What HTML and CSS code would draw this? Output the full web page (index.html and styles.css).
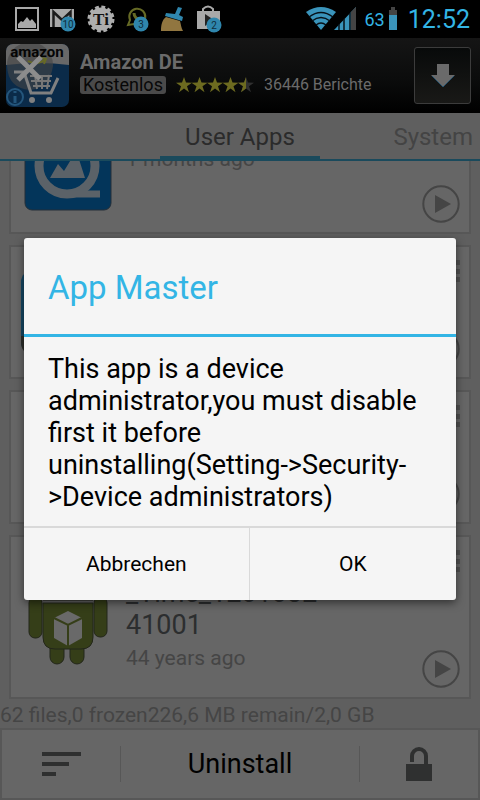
FILE: index.html
```html
<!DOCTYPE html>
<html lang="en">
<head>
<meta charset="utf-8">
<meta name="viewport" content="width=device-width, initial-scale=1">
<title>App Master</title>
<link rel="stylesheet" href="styles.css">
</head>
<body>
<svg class="defs" width="0" height="0" aria-hidden="true">
  <symbol id="play" viewBox="0 0 38 38"><circle cx="19" cy="19" r="17.7" fill="none" stroke="currentColor" stroke-width="2"/><path d="M13 10v18l16-9z" fill="currentColor"/></symbol>
  <symbol id="dots" viewBox="0 0 6 23"><path d="M0 0h6v5H0zM0 9h6v5H0zM0 17h6v5H0z" fill="currentColor"/></symbol>
</svg>
<header class="status">
  <div class="notices">
    <svg width="24" height="24" viewBox="0 0 24 24"><path d="M1 1h22v22H1z" fill="none" stroke="#a9a9a9" stroke-width="2"/><path d="M3 21v-4l3-3 2 1 4-5 3 4 2-2 4 5v4z" fill="#a9a9a9"/></svg>
    <svg width="26" height="26" viewBox="0 0 26 26"><path d="M0 3h24v18H0z" fill="#a9a9a9"/><path d="M3.500 21V6l8.500 8 8.500-8v15" fill="none" stroke="#1c1c1c" stroke-width="2.500"/><circle cx="18" cy="18" r="7.500" fill="#2f86ad"/><text x="18" y="22" class="count">10</text></svg>
    <svg width="28" height="28" viewBox="0 0 28 28"><circle cx="14" cy="14" r="11.500" fill="#adadad"/><circle cx="14" cy="14" r="12" fill="none" stroke="#adadad" stroke-width="3" stroke-dasharray="3.800 2.480"/><text x="14" y="20" class="ti">Ti</text></svg>
    <svg width="24" height="26" viewBox="0 0 24 26"><path d="M2 19l2-5a8 8 0 1 1 4 4z" fill="none" stroke="#666a25" stroke-width="2"/><path d="M8 7c0 4 3 7 7 6" fill="none" stroke="#666a25" stroke-width="3"/><circle cx="15" cy="18" r="7.500" fill="#2f86ad"/><text x="15" y="22" class="count">3</text></svg>
    <svg width="24" height="26" viewBox="0 0 24 26"><path d="M5 11l14 4c1 3 1 7 3 10H0c0-6 1-11 5-14z" fill="#917640"/><path d="M5 7l9 1 3-7 4 1-3 7 4 2-1 4L4 10z" fill="#2f86ad"/></svg>
    <svg width="26" height="28" viewBox="0 0 26 28"><path d="M7 7V4q5-5 10 0v3" fill="none" stroke="#a9a9a9" stroke-width="2"/><path d="M1 6h23v18H1z" fill="#a9a9a9"/><path d="M9 9v12l9-6z" fill="#222"/><circle cx="18" cy="20" r="7.500" fill="#2f86ad"/><text x="18" y="24" class="count">2</text></svg>
  </div>
  <div class="system">
    <svg width="51" height="24" viewBox="0 0 51 24"><path d="M15 23L0 5q15-10 30 0z" fill="#3a94bb"/><path d="M3 10q12-9 24 0M6 14q9-7 18 0M10 18q5-4 10 0" fill="none" stroke="#061018" stroke-width="1.500"/><path d="M28 23L50 0v23z" fill="#3a94bb"/><path d="M45 5l5-5v23h-5z" fill="#444"/><path d="M33 17v6M38 12v11M44 6v17" stroke="#061018" stroke-width="1.500"/></svg>
    <span class="level">63</span>
    <svg width="8" height="24" viewBox="0 0 8 24"><path d="M0 3h2V0h4v3h2v6H0z" fill="#444"/><path d="M0 8h8v15H0z" fill="#3a94bb"/></svg>
    <time class="clock">12:52</time>
  </div>
</header>
<section class="ad">
  <svg class="ad-logo" width="63" height="63" viewBox="0 0 63 63">
    <rect width="63" height="63" rx="7" fill="#0b2b49"/><path d="M0 21V7a7 7 0 0 1 7-7h49a7 7 0 0 1 7 7v14q-30-4-63 0z" fill="#686868"/>
    <path d="M1 22a23 23 0 0 1 46-2v2q-3 22-23 24Q2 44 1 22z" fill="#454545" opacity=".6"/>
    <text x="31" y="13" class="brand">amazon</text>
    <path d="M22 17q9 5 18-2M35 14l5 1-2 5" fill="none" stroke="#666a25" stroke-width="2"/>
    <path d="M8 28h10l7 21h20l7-15" fill="none" stroke="#808080" stroke-width="3"/><path d="M24 32h22M25 37h20M27 42h17M29 31l2 14M36 31v14M43 31l-2 14" stroke="#777" stroke-width="2"/>
    <circle cx="26" cy="56" r="3" fill="#808080"/><circle cx="43" cy="56" r="3" fill="#808080"/>
    <circle cx="9" cy="53" r="8" fill="none" stroke="#24567c" stroke-width="2"/><path d="M9 47v2M9 52v7" stroke="#24567c" stroke-width="3"/>
    <path d="M12 13l22 22M35 13L12 36" stroke="#8c8c8c" stroke-width="5"/>
  </svg>
  <div class="ad-info">
    <strong class="ad-name">Amazon DE</strong>
    <div class="ad-meta">
      <span class="free">Kostenlos</span>
      <svg width="78" height="16" viewBox="0 0 78 16"><defs><path id="star" d="M8 0l2 5.500 6 .2-5 3.500 2 6-5-3.700-5 3.700 2-6-5-3.500 6-.2z"/></defs><g fill="#6d6b20"><use href="#star"/><use href="#star" x="15.500"/><use href="#star" x="31"/><use href="#star" x="46.500"/></g><use href="#star" x="62" fill="#303030"/><path d="M70 0v11.500l-5 3.700 2-6-5-3.500 6-.2z" fill="#6d6b20"/></svg>
      <span class="reviews">36446 Berichte</span>
    </div>
  </div>
  <button class="download" aria-label="Download"><svg width="24" height="24" viewBox="0 0 24 24"><path d="M6 0h12v11h6L12 23 0 11h6z" fill="#6a6a6a"/><path d="M1 12l11 11 11-11" fill="none" stroke="#24506b"/></svg></button>
</section>
<nav class="tabs">
  <a class="tab active" href="#user">User Apps</a>
  <a class="tab next" href="#system">System</a>
</nav>
<main class="list" id="user">
  <article class="card">
    <svg class="icon" width="88" height="88" viewBox="0 0 88 88"><rect x="1" y="1" width="86" height="86" rx="7" fill="#03355a" stroke="#252f38"/><circle cx="43" cy="43" r="28" fill="none" stroke="#5b6268" stroke-width="9"/><path d="M42 71h34" stroke="#5b6268" stroke-width="7"/><path d="M26 55l8-14 6 7 11-18h2l8 25z" fill="#5b6268"/></svg>
    <div class="text short"><p>1 months ago</p></div>
    <button class="more" aria-label="More"><svg width="6" height="23"><use href="#dots"/></svg></button>
    <button class="open" aria-label="Open"><svg width="38" height="38"><use href="#play"/></svg></button>
  </article>
  <article class="card">
    <svg class="icon wide" width="96" height="84" viewBox="0 0 96 84"><rect width="96" height="84" rx="12" fill="#174864"/><path d="M0 66h96v6q0 12-12 12H12Q0 84 0 72z" fill="#2c2e29"/></svg>
    <button class="more" aria-label="More"><svg width="6" height="23"><use href="#dots"/></svg></button>
    <button class="open" aria-label="Open"><svg width="38" height="38"><use href="#play"/></svg></button>
  </article>
  <article class="card">
    <button class="more" aria-label="More"><svg width="6" height="23"><use href="#dots"/></svg></button>
    <button class="open" aria-label="Open"><svg width="38" height="38"><use href="#play"/></svg></button>
  </article>
  <article class="card">
    <svg class="icon" width="88" height="96" viewBox="0 0 88 96"><g fill="#353e18" stroke="#23261a"><rect x="5" y="28" width="13" height="41" rx="6"/><rect x="70" y="28" width="13" height="40" rx="6"/><rect x="26" y="68" width="14" height="27" rx="7"/><rect x="46" y="68" width="14" height="27" rx="7"/><path d="M19 34h50v34q0 12-12 12H31q-12 0-12-12z"/><path d="M19 31q2-22 25-22t25 22z"/></g><path d="M30 49l14-7 14 7v20l-14 8-14-8z" fill="#696969"/><path d="M30 49l14 7 14-7M44 56v21" fill="none" stroke="#353e18" stroke-width="2"/></svg>
    <div class="text long"><h2>_Time_1201032<br>41001</h2><p>44 years ago</p></div>
    <button class="more" aria-label="More"><svg width="6" height="23"><use href="#dots"/></svg></button>
    <button class="open" aria-label="Open"><svg width="38" height="38"><use href="#play"/></svg></button>
  </article>
</main>
<p class="summary">62 files,0 frozen226,6 MB remain/2,0 GB</p>
<footer class="actions">
  <button aria-label="Sort"><svg width="40" height="26" viewBox="0 0 40 26"><path d="M1 1h39v4H1zM1 11h27v4H1zM1 21h14v4H1z" fill="#2f3030"/></svg></button>
  <button class="uninstall">Uninstall</button>
  <button aria-label="Unlock"><svg width="28" height="36" viewBox="0 0 28 36"><path d="M7 16V10a7 7 0 0 1 14 0v10" fill="none" stroke="#2f3030" stroke-width="4"/><path d="M1 18h26v17H1z" fill="#2f3030"/></svg></button>
</footer>
<div class="overlay">
  <section class="dialog" role="alertdialog" aria-labelledby="title" aria-describedby="message">
    <h1 id="title">App Master</h1>
    <p id="message">This app is a device administrator,you must disable first it before uninstalling(Setting-&gt;Security-&gt;Device administrators)</p>
    <div class="choices"><button>Abbrechen</button><button>OK</button></div>
  </section>
</div>
</body>
</html>
```

FILE: styles.css
```css
* { box-sizing: border-box; }
body {
  margin: 0;
  height: 100vh;
  display: flex;
  flex-direction: column;
  position: relative;
  overflow: hidden;
  background: #5f5f5f;
  color: #2c2e2f;
  font-family: Roboto, "Liberation Sans", sans-serif;
}
h1, h2, p { margin: 0; font-weight: 400; }
button {
  margin: 0;
  padding: 0;
  border: 0;
  background: none;
  color: inherit;
  font: inherit;
}
svg { display: block; flex: none; }
.defs { position: absolute; }

.status {
  flex: none;
  height: 38px;
  padding: 0 10px 0 15px;
  display: flex;
  align-items: center;
  justify-content: space-between;
  background: #000;
  color: #33b5e5;
}
.notices { display: flex; align-items: center; gap: 11px; }
.system { display: flex; align-items: center; gap: 4px; }
.level { font-size: 18px; margin-left: 4px; }
.clock { font-size: 25px; margin-left: 7px; }
.count { font-size: 10px; fill: #102d3b; text-anchor: middle; }
.ti { font: bold 17px "Liberation Serif", serif; fill: #111; text-anchor: middle; }

.ad {
  flex: none;
  height: 75px;
  padding: 0 9px 0 6px;
  display: flex;
  align-items: center;
  gap: 11px;
  background: linear-gradient(#151515, #0b0c0c 55%, #000);
  color: #6b6b6b;
}
.ad-info { flex: 1; padding-bottom: 8px; }
.ad-name { display: block; font-size: 20px; line-height: 26px; font-weight: 700; }
.ad-meta { display: flex; align-items: center; gap: 10px; }
.free {
  padding: 0 3px;
  border-radius: 3px;
  background: #4a4a4a;
  color: #080808;
  font-size: 18px;
  line-height: 18px;
}
.reviews { font-size: 16px; line-height: 20px; }
.brand { font: bold 15px Roboto, sans-serif; fill: #050505; text-anchor: middle; }
.download {
  width: 57px;
  height: 57px;
  display: grid;
  place-items: center;
  border: 1px solid #3c3c3c;
  border-radius: 3px;
  background: linear-gradient(#080a0a, #191917);
}

.tabs {
  flex: none;
  height: 48px;
  display: grid;
  grid-template-columns: repeat(3, 1fr);
  border-bottom: 2px solid #1a4a5c;
}
.tab {
  font-size: 24px;
  line-height: 48px;
  text-align: center;
  text-decoration: none;
  color: #444;
}
.active {
  grid-column: 2;
  color: #2b2b2b;
  height: 46px;
  border-bottom: 3px solid #1a4a5c;
}
.next { text-align: right; padding-right: 7px; }

.list {
  flex: 1;
  min-height: 0;
  padding: 0 9px 3px;
  display: flex;
  flex-direction: column;
  justify-content: flex-end;
  gap: 11px;
  overflow: hidden;
}
.card {
  flex: none;
  min-height: 134px;
  padding: 8px 9px 9px 13px;
  display: grid;
  grid-template-columns: 88px 1fr 38px;
  grid-template-rows: 1fr 38px;
  column-gap: 14px;
  border: 2px solid #575757;
  background: #666;
}
.icon { grid-row: 1 / 3; align-self: center; }
.wide { margin-left: -3px; }
.text { grid-row: 1 / 3; grid-column: 2; padding-top: 32px; }
.text h2 { font-size: 27px; line-height: 32px; }
.text p { font-size: 21px; line-height: 34px; color: #454545; }
.card:last-child { min-height: 164px; }
.more { grid-column: 3; grid-row: 1; justify-self: end; align-self: start; padding-top: 5px; color: #505050; }
.open { grid-column: 3; grid-row: 2; color: #454545; }

.summary { flex: none; font-size: 21px; line-height: 26px; color: #454545; }
.actions {
  flex: none;
  height: 72px;
  display: grid;
  grid-template-columns: 118px 1fr 118px;
  align-items: center;
  border: 2px solid #575757;
  background: #666;
}
.actions button { display: grid; place-items: center; height: 36px; }
.actions .uninstall {
  border: solid #575757;
  border-width: 0 1px;
  color: #000;
  font-size: 27px;
}

.overlay {
  position: absolute;
  inset: 38px 0 0;
  display: grid;
  align-items: center;
  padding: 0 24px;
}
.dialog {
  border-radius: 3px;
  background: #f5f5f5;
  color: #000;
  box-shadow: 0 3px 9px rgba(0, 0, 0, .5);
}
.dialog h1 {
  padding: 3px 24px 0;
  border-bottom: 3px solid #33b5e5;
  color: #33b5e5;
  font-size: 33px;
  line-height: 93px;
}
.dialog p { padding: 16px 24px 13px; font-size: 27px; line-height: 32px; }
.choices {
  display: grid;
  grid-template-columns: 13fr 12fr;
  border-top: 2px solid #d9d9d9;
}
.choices button { height: 72px; font-size: 21px; }
.choices button + button { border-left: 1px solid #d9d9d9; }
```
